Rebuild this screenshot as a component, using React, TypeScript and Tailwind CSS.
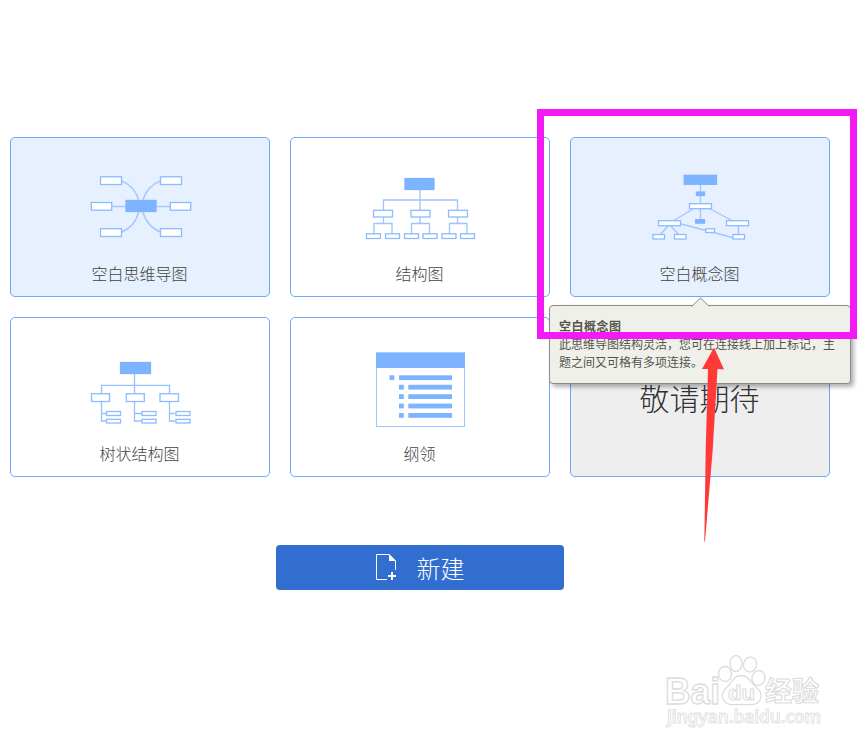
import { ReactNode } from 'react';

type TemplateType = {
  name: string;
  viewBox: string;
  active?: boolean;
  icon: ReactNode;
};

type BoxType = {
  x: number;
  y: number;
  w: number;
  h: number;
  solid?: boolean;
};

const Box = ({ x, y, w, h, solid }: BoxType) => (
  <rect
    x={x + 0.5}
    y={y + 0.5}
    width={w - 1}
    height={h - 1}
    fill={solid ? '#7eb3ff' : '#fff'}
    stroke={solid ? '#7eb3ff' : '#8cbbff'}
    strokeWidth="1.3"
  />
);

const MindMapIcon = () => (
  <>
    <g fill="none" stroke="#a5caff" strokeWidth="1.5">
      <path d="M121 180.8Q135 186 139 201M161 180.8Q147 186 142.5 201" />
      <path d="M121 232.2Q135 227 139 211M161 232.2Q147 227 142.5 211" />
      <path d="M112 206.5H171" />
    </g>
    <Box x={100} y={176.3} w={22} h={8.7} />
    <Box x={160} y={176.3} w={22} h={8.7} />
    <Box x={90.8} y={202} w={21.4} h={8.7} />
    <Box x={169.8} y={202} w={21.4} h={8.7} />
    <Box x={100} y={228.2} w={22} h={8.8} />
    <Box x={160} y={228.2} w={22} h={8.8} />
    <Box x={125.5} y={200} w={31} h={12} solid />
  </>
);

const StructureIcon = () => (
  <>
    <g fill="none" stroke="#9cc5ff" strokeWidth="1.3">
      <path d="M420 190V223.5M383.5 211V200H457.5V211M383.5 216V223.5M457.5 216V223.5" />
      <path d="M374 234V223.5H392V234M411.5 234V223.5H429.5V234M449.5 234V223.5H467V234" />
    </g>
    <Box x={404.5} y={178} w={30} h={12} solid />
    {[373, 410.5, 448].map((x) => (
      <Box key={x} x={x} y={209.8} w={20} h={7.7} />
    ))}
    {[366, 385, 404, 422.5, 441.5, 460].map((x) => (
      <Box key={x} x={x} y={233.3} w={15} h={5.7} />
    ))}
  </>
);

const ConceptIcon = () => (
  <>
    <g fill="none" stroke="#a0c7ff" strokeWidth="1.4">
      <path d="M700.5 185V219M693 209L673 221M710 209L733 221" />
      <path d="M668 226L660 235M671 226L679 235M681 224L708 231M712 232L734 238M738.5 226V234" />
    </g>
    <Box x={683.7} y={174.8} w={33.3} h={10} solid />
    <Box x={696} y={191.6} w={9} h={4.4} solid />
    <Box x={689} y={203.2} w={23} h={6} />
    <Box x={695.2} y={219.2} w={9.8} h={4.4} solid />
    <Box x={658} y={220.2} w={23} h={6} />
    <Box x={726} y={220.2} w={23} h={6} />
    <Box x={705.2} y={228.3} w={9.8} h={4.7} />
    <Box x={652.5} y={234} w={12.5} h={5.5} />
    <Box x={674} y={234} w={12.5} h={5.5} />
    <Box x={732.5} y={234} w={12.5} h={5.5} />
  </>
);

const TreeIcon = () => (
  <>
    <g fill="none" stroke="#93c0ff" strokeWidth="1.3">
      <path d="M134.5 374V393M101.5 393V385.3H169.5V393" />
      <path d="M101.5 401V421H107M101.5 413.5H107M134.5 401V421H142M134.5 413.5H142M169.5 401V421H175M169.5 413.5H175" />
    </g>
    <Box x={120} y={362} w={31} h={12} solid />
    <Box x={91} y={393.2} w={19} h={8.8} />
    <Box x={125.8} y={393.2} w={19} h={8.8} />
    <Box x={159.5} y={393.2} w={19.5} h={8.8} />
    {[106, 141.5, 175.5].map((x) => (
      <g key={x}>
        <Box x={x} y={411} w={15} h={5} />
        <Box x={x} y={418.8} w={15} h={4.7} />
      </g>
    ))}
  </>
);

const OutlineIcon = () => (
  <>
    <rect x="376.5" y="353" width="88" height="73.5" fill="#fff" stroke="#9cc5ff" />
    <g fill="#7eb3ff">
      <rect x="376" y="352.5" width="89" height="15.5" />
      <rect x="389.5" y="375.3" width="4.8" height="4.8" />
      <rect x="399" y="375.3" width="53" height="4.8" />
      {[384.8, 394.2, 403.6, 413].map((y) => (
        <g key={y}>
          <rect x="399" y={y} width="4.8" height="4.8" />
          <rect x="408.3" y={y} width="43.7" height="4.8" />
        </g>
      ))}
    </g>
  </>
);

const templates: TemplateType[] = [
  { name: '空白思维导图', viewBox: '11 138 258 120', active: true, icon: <MindMapIcon /> },
  { name: '结构图', viewBox: '291 138 258 120', icon: <StructureIcon /> },
  { name: '空白概念图', viewBox: '571 138 258 120', active: true, icon: <ConceptIcon /> },
  { name: '树状结构图', viewBox: '11 318 258 120', icon: <TreeIcon /> },
  { name: '纲领', viewBox: '291 318 258 120', icon: <OutlineIcon /> },
];

const TemplateCard = ({ name, viewBox, active, icon }: TemplateType) => (
  <div
    className={`flex flex-col rounded-[5px] border border-[#69a8fb] ${
      active ? 'bg-[#e6f0ff]' : 'bg-white'
    }`}
  >
    <svg className="h-[120px] w-[258px]" viewBox={viewBox}>
      {icon}
    </svg>
    <p className="pr-px text-center text-base leading-[30px] text-[#44443c]">{name}</p>
  </div>
);

const Tooltip = () => (
  <div className="absolute left-[549px] top-[305px] h-[79px] w-[302px] rounded border border-[#8c8c84] bg-[#f0f0eb] px-[9px] pt-[11px] text-xs font-normal leading-[18px] text-[#55554d] shadow-[3px_3px_4px_rgba(0,0,0,0.3)]">
    <svg className="absolute left-[141px] top-[-9px] h-[10px] w-[20px]" viewBox="0 0 20 10">
      <path d="M0.5 9.5L9.5 1L18.5 9.5" fill="#f0f0eb" stroke="#8c8c84" />
    </svg>
    <p className="font-bold tracking-[0.5px]">空白概念图</p>
    <p className="whitespace-nowrap">
      此思维导图结构灵活，您可在连接线上加上标记，主
      <br />
      题之间又可格有多项连接。
    </p>
  </div>
);

const Watermark = () => (
  <svg
    className="absolute left-[660px] top-[650px] h-[85px] w-[170px]"
    viewBox="660 650 170 85"
    fill="#fff"
    stroke="#dcdcdc"
    strokeWidth="1.3"
    fontFamily="'Liberation Sans', 'Noto Sans CJK SC', sans-serif"
    fontWeight="bold"
  >
    <text x="665" y="703.5" fontSize="36" textLength="55" lengthAdjust="spacingAndGlyphs">
      Bai
    </text>
    <ellipse cx="725" cy="674" rx="6.5" ry="7.5" />
    <ellipse cx="736" cy="663.5" rx="6" ry="8" />
    <ellipse cx="750" cy="664.5" rx="6.5" ry="7.5" transform="rotate(12 750 664.5)" />
    <ellipse cx="758.5" cy="678" rx="6.5" ry="7.5" transform="rotate(12 758.5 678)" />
    <path d="M741 675.5C748 675.5 750 681 755 686C760 690 762 695 760.5 699C758 706 750 704.5 741.5 704.5C733 704.5 726 706 723 699C720.5 694 724 690 728 686C733 681 734 675.5 741 675.5Z" />
    <text x="728" y="700" fontSize="20" textLength="27" lengthAdjust="spacingAndGlyphs" strokeWidth="1">
      du
    </text>
    <text x="765" y="701" fontSize="27" textLength="54" strokeWidth="1.1">
      经验
    </text>
    <text
      x="667"
      y="723"
      fontFamily="'Noto Sans', 'Open Sans', sans-serif"
      fontSize="17"
      fontWeight="600"
      textLength="154"
      lengthAdjust="spacingAndGlyphs"
      strokeWidth="0.9"
      stroke="#e0e0e0"
    >
      jingyan.baidu.com
    </text>
  </svg>
);

const App = () => {
  return (
    <div className="relative h-[749px] w-[868px] overflow-hidden bg-white pt-[137px] font-['Noto_Sans_CJK_SC',sans-serif] font-light">
      <div className="ml-[10px] grid w-[820px] grid-cols-3 grid-rows-[160px_160px] gap-5">
        {templates.map((e) => (
          <TemplateCard key={e.name} {...e} />
        ))}
        <div className="flex items-center justify-center rounded-[5px] border border-[#69a8fb] bg-[#eee] pr-px text-[30px] leading-10 text-[#333]">
          敬请期待
        </div>
      </div>
      <button className="ml-[276px] mt-[68px] flex h-[45px] w-[288px] items-center justify-center gap-5 rounded bg-[#316ed0] pr-px text-2xl font-light text-white">
        <svg className="h-[28px] w-[22px]" viewBox="375 554 22 28">
          <path d="M387 579.5H376.5V554.5H389L395.5 561V570" fill="none" stroke="#fff" />
          <path d="M389 554L396 561H389Z" fill="#fff" />
          <path d="M392 572V580M388 576H396" stroke="#fff" strokeWidth="2" />
        </svg>
        <span>新建</span>
      </button>
      <Tooltip />
      <div className="absolute left-[537px] top-[109px] h-[230px] w-[320px] border-[7px] border-[#f31af6]" />
      <svg className="absolute left-[700px] top-[346px] h-[198px] w-[28px]" viewBox="700 346 28 198">
        <path d="M714 347.5L724 369.5L717.5 369L712.7 450L705 541.5H704.3L705.7 450L708 369L702 369Z" fill="#ff3838" />
      </svg>
      <Watermark />
    </div>
  );
};

export default App;
